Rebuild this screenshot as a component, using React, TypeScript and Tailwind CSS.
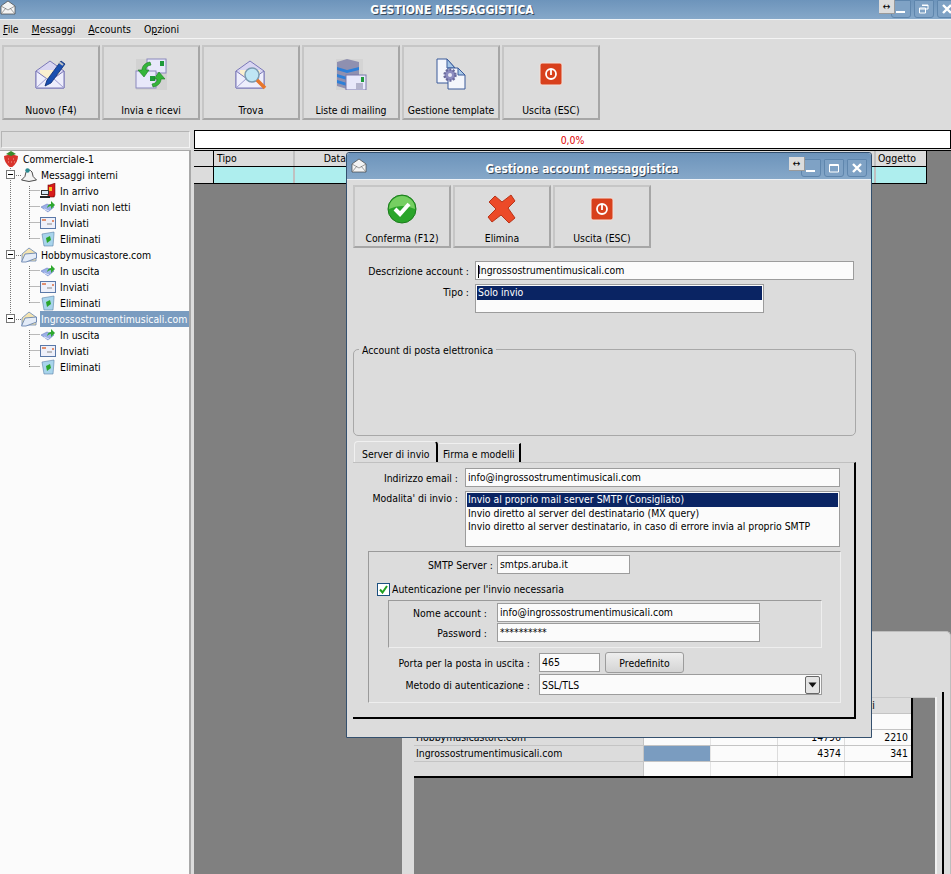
import React from "react";

const FONT = "font-['DejaVu_Sans_Condensed','DejaVu_Sans',sans-serif] text-[10.4px] leading-[14px] text-black";

const Env = ({ x = 0 }: { x?: number }) => (
  <g transform={`translate(${x} 0)`}>
    <path d="M1 13 L15 3 L29 13 V30 H1 Z" fill="#d9d6f2" stroke="#7a78b8" />
    <path d="M5 12 H25 V21 H5 Z" fill="#fbf0d0" />
    <path d="M1 13 L15 23 L29 13 V30 H1 Z" fill="#eeeefc" stroke="#7a78b8" />
    <path d="M1 30 L12 20 M29 30 L18 20" stroke="#9c9ad0" fill="none" />
  </g>
);

const IconNuovo = () => (
  <svg width="32" height="32" viewBox="0 0 32 32">
    <Env />
    <path d="M10 28 L12 22 L26 3 L30 6 L16 25 Z" fill="#1a4fb0" stroke="#0c2c70" strokeWidth="0.8" />
    <path d="M24 4 L28 7" stroke="#c0c0c0" strokeWidth="2" />
  </svg>
);
const IconInvia = () => (
  <svg width="32" height="32" viewBox="0 0 32 32">
    <rect x="1" y="1" width="31" height="31" fill="#d2d2d2" />
    <rect x="12" y="1" width="19" height="14" fill="#e8e8fa" stroke="#8a88bc" />
    <rect x="1" y="13" width="20" height="17" fill="#e8e8fa" stroke="#8a88bc" />
    <rect x="25" y="3" width="4" height="5" fill="#1f9a3a" />
    <rect x="15" y="18" width="5" height="5" fill="#1f9a3a" />
    <path d="M15 4 C9 5 7 9 7 12 H3 L9 19 L14 12 H11 C11 9 12 8 16 7 Z" fill="#35b53a" stroke="#1a7a20" strokeWidth="0.6" />
    <path d="M18 29 C24 28 26 24 26 21 H30 L24 14 L19 21 H22 C22 24 21 25 17 26 Z" fill="#35b53a" stroke="#1a7a20" strokeWidth="0.6" />
  </svg>
);
const IconTrova = () => (
  <svg width="32" height="32" viewBox="0 0 32 32">
    <Env />
    <circle cx="17" cy="17" r="7" fill="#bfe6f4" stroke="#7a9ab0" strokeWidth="1.5" />
    <path d="M22 22 L30 30" stroke="#e8762a" strokeWidth="3.5" />
  </svg>
);
const IconListe = () => (
  <svg width="32" height="32" viewBox="0 0 32 32">
    <rect x="1" y="1" width="27" height="31" fill="#d4d4d4" />
    <path d="M2 4 L12 1 L24 4 V28 L12 31 L2 28 Z" fill="#8f90b0" />
    <path d="M2 9 L12 12 L24 9 V12 L12 15 L2 12 Z" fill="#2d7fd8" />
    <path d="M2 16 L12 19 V22 L2 19 Z" fill="#2d7fd8" />
    <path d="M2 22 L12 25 V28 L2 25 Z" fill="#2d7fd8" />
    <rect x="11" y="17" width="20" height="15" fill="#e8e8fa" stroke="#7a78a8" />
    <rect x="26" y="19" width="3" height="5" fill="#1f9a3a" />
    <path d="M21 26 H28 M21 28 H28 M21 30 H28" stroke="#666688" strokeWidth="0.8" />
  </svg>
);
const IconTemplate = () => (
  <svg width="30" height="32" viewBox="0 0 30 32">
    <path d="M1 1 H11 L19 10 V25 H1 Z" fill="#f4f6fc" stroke="#3a5a9a" />
    <path d="M11 1 V10 H19 Z" fill="#a8c8e8" stroke="#3a5a9a" />
    <path d="M12 10 H22 L29 17 V31 H12 Z" fill="#f4f6fc" stroke="#3a5a9a" />
    <path d="M22 10 V17 H29 Z" fill="#a8c8e8" stroke="#3a5a9a" />
    <circle cx="14" cy="17" r="5.5" fill="#8c8cc0" stroke="#6a6a9c" strokeWidth="2.4" strokeDasharray="2 1.5" />
    <circle cx="14" cy="17" r="2" fill="#e8e8f4" />
  </svg>
);
const IconExit = () => (
  <svg width="24" height="24" viewBox="0 0 24 24">
    <rect x="1" y="1" width="22" height="22" rx="2" fill="#d8401c" stroke="#f4e0d8" />
    <circle cx="12" cy="12" r="5" fill="none" stroke="#fff" strokeWidth="1.8" />
    <path d="M12 8 V13" stroke="#fff" strokeWidth="1.8" />
  </svg>
);
const IconCheck = () => (
  <svg width="30" height="30" viewBox="0 0 30 30">
    <circle cx="15" cy="15" r="14" fill="#2aa52a" stroke="#1c7c1c" />
    <path d="M2 15 A13 13 0 0 1 28 15 Q15 9 2 15" fill="#76cf62" />
    <path d="M8 15 L13 20 L22 10" fill="none" stroke="#fff" strokeWidth="4" />
  </svg>
);
const IconX = () => (
  <svg width="30" height="30" viewBox="0 0 30 30">
    <path d="M2 8 L8 2 L15 8 L24 1 L28 7 L21 14 L28 24 L22 29 L14 21 L5 28 L1 23 L9 15 Z" fill="#ec4a28" stroke="#b83418" />
  </svg>
);
const TitleEnv = () => (
  <svg width="16" height="16" viewBox="0 0 16 16">
    <path d="M1 6 L8 1 L15 6 V14 H1 Z" fill="#f4f4f4" stroke="#444" strokeWidth="0.7" />
    <path d="M1 6 L8 10 L15 6 M1 14 L6 8 M15 14 L10 8" fill="none" stroke="#777" strokeWidth="0.7" />
  </svg>
);

const Strawberry = () => (
  <svg width="16" height="16" viewBox="0 0 16 16">
    <path d="M1 5 Q8 2 15 5 Q15 12 8 17 Q1 12 1 5" fill="#d8342c" />
    <path d="M3 3 L8 0 L13 3 L8 5 Z" fill="#3a8a2a" />
    <path d="M5 8 h1 M10 8 h1 M8 11 h1 M5 11 h1 M11 11 h1" stroke="#f4a090" />
  </svg>
);
const Bell = () => (
  <svg width="16" height="16" viewBox="0 0 16 16">
    <path d="M0.5 13 Q5 10 5 5 Q8 1 11 5 Q11 10 15.5 13 Q8 16 0.5 13" fill="#f4f4f4" stroke="#222" strokeWidth="0.8" />
    <circle cx="6.5" cy="3.5" r="2.2" fill="#2a8a90" />
  </svg>
);
const Inbox = () => (
  <svg width="16" height="16" viewBox="0 0 16 16">
    <rect x="8" y="2" width="6" height="12" fill="#d81c1c" stroke="#600" strokeWidth="0.6" />
    <path d="M10 2 L15 0 V12 L14 14" fill="#d81c1c" stroke="#600" strokeWidth="0.5" />
    <rect x="9" y="4" width="3" height="4" fill="#f4c020" />
    <rect x="1" y="7" width="8" height="5" fill="#333" />
    <rect x="2" y="8" width="6" height="3" fill="#d8e8f4" />
    <rect x="0" y="13" width="10" height="2" fill="#222" />
  </svg>
);
const Outbox = () => (
  <svg width="16" height="16" viewBox="0 0 16 16">
    <path d="M1 8 L7 5 L14 8 L8 13 Z" fill="#9cb0e8" stroke="#6a80c0" strokeWidth="0.6" />
    <path d="M4 10 L9 12" stroke="#dfe6fa" />
    <path d="M7 9 Q8 5 11 5 V2 L15 6 L11 10 V7 Q9 7 7 9" fill="#2ea82e" />
  </svg>
);
const Sent = () => (
  <svg width="16" height="16" viewBox="0 0 16 16">
    <rect x="0.5" y="2.5" width="15" height="11" fill="#eef0fa" stroke="#5a78a8" />
    <rect x="2" y="4" width="4" height="2" fill="#e09070" />
    <path d="M7 9 H12" stroke="#888" />
    <rect x="12" y="5" width="2" height="2" fill="#e09070" />
  </svg>
);
const Trash = () => (
  <svg width="16" height="16" viewBox="0 0 16 16">
    <path d="M2 3 L14 1 V3 L13 15 H4 Z" fill="#a8d4ec" stroke="#5a80a8" strokeWidth="0.6" />
    <path d="M6 7 L10 5 L11 9 L7 12 Z" fill="#2aa52a" />
  </svg>
);
const FolderEnv = () => (
  <svg width="16" height="16" viewBox="0 0 16 16">
    <path d="M1 7 L8 1 L15 6 V14 H1 Z" fill="#f4e4b0" stroke="#6a88b8" strokeWidth="0.8" />
    <path d="M0.5 15 L4 7 L15.5 6 V11 L5 15 Z" fill="#e4ecf8" stroke="#5a78a8" strokeWidth="0.8" />
  </svg>
);

const tb = "flex flex-col items-center bg-[#dcdcdc] border-2 border-t-[#c6c6c6] border-l-[#c6c6c6] border-r-[#a6a6a6] border-b-[#a6a6a6]";

const ToolBtn = ({ icon, label }: { icon: React.ReactNode; label: string }) => (
  <div className={`${tb} w-[98px] h-[75px]`}>
    <div className="h-[56px] flex items-center justify-center pb-[2px]">{icon}</div>
    <div className="whitespace-nowrap">{label}</div>
  </div>
);
const DlgBtn = ({ icon, label }: { icon: React.ReactNode; label: string }) => (
  <div className={`${tb} w-[98px] h-[63px]`}>
    <div className="h-[44px] flex items-center justify-center pb-[1px]">{icon}</div>
    <div className="whitespace-nowrap">{label}</div>
  </div>
);

const WinBtn = ({ kind }: { kind: "min" | "max" | "rest" | "x" }) => (
  <div className="w-[20px] h-[18px] rounded-b-[3px] rounded-t-[1px] border border-[#5f86ad] bg-[#7fa2c5] flex items-center justify-center">
    <svg width="12" height="12" viewBox="0 0 12 12">
      {kind === "min" && <rect x="1" y="8" width="9" height="2" fill="#fff" />}
      {kind === "max" && <path d="M1.5 2.5 H10.5 V10 H1.5 Z M1.5 3.5 H10.5" fill="none" stroke="#fff" strokeWidth="1" />}
      {kind === "rest" && <path d="M4 2 H10 V6 H8 M1.5 5 H7.5 V10 H1.5 Z M1.5 6 H7.5 M4 2.5 H10" fill="none" stroke="#fff" />}
      {kind === "x" && <path d="M2 2 L10 10 M10 2 L2 10" stroke="#fff" strokeWidth="2.4" />}
    </svg>
  </div>
);
const Resize = () => (
  <div className="absolute top-0 w-[16px] h-[14px] bg-[#dcdcdc] border-r border-b border-[#9a9a9a] flex items-center justify-center text-[10px] leading-none">↔</div>
);

const TreeRow = ({ icon, label, level, sel }: { icon: React.ReactNode; label: string; level: 0 | 1 | 2; sel?: boolean }) => (
  <div className="flex h-4 items-center">
    <div className={level === 0 ? "w-[3px]" : level === 1 ? "w-[21px]" : "w-[40px]"} />
    <div className="w-4 h-4 shrink-0">{icon}</div>
    <div className="w-[4px]" />
    <div className={sel ? "bg-[#7a9cc0] text-white h-4 w-[149px] -ml-[1px] pl-[1px] whitespace-nowrap leading-[16px]" : "whitespace-nowrap"}>{label}</div>
  </div>
);

const Exp = ({ top }: { top: number }) => (
  <div style={{ top }} className="absolute left-[6px] w-[9px] h-[9px] bg-white border border-[#777] flex items-center justify-center">
    <div className="w-[5px] h-px bg-black" />
  </div>
);

const Input = ({ value, cls }: { value: React.ReactNode; cls: string }) => (
  <div className={`${cls} h-[19px] bg-[#fbfbfb] border border-[#9c9c9c] px-[2px] leading-[17px] whitespace-nowrap`}>{value}</div>
);
const Lbl = ({ w, children }: { w: string; children: React.ReactNode }) => (
  <div className={`${w} shrink-0 text-right whitespace-nowrap`}>{children}</div>
);

const Dialog = () => (
  <div className="absolute left-[346px] top-[152px] w-[526px] h-[586px] bg-[#dcdcdc] border border-[#34506e] rounded-t-[3px]">
    <div className="relative h-[27px] rounded-t-[3px] bg-gradient-to-b from-[#6d94bb] to-[#86a8c9] flex items-center justify-center border-b border-[#eef2f6] pr-[54px]">
      <div className="absolute left-[4px] top-[5px]"><TitleEnv /></div>
      <div className="text-white font-bold text-[11.8px] [text-shadow:1px_1px_0_#3a4a5a] pt-[6px]">Gestione account messaggistica</div>
      <div className="absolute right-[4px] top-[6px] flex gap-[3px]"><WinBtn kind="min" /><WinBtn kind="max" /><WinBtn kind="x" /></div>
      <div className="absolute left-[442px] top-[4px]"><Resize /></div>
    </div>
    <div className="pl-[6px] pt-[5px]">
      <div className="flex gap-[2px]">
        <DlgBtn icon={<IconCheck />} label="Conferma (F12)" />
        <DlgBtn icon={<IconX />} label="Elimina" />
        <DlgBtn icon={<IconExit />} label="Uscita (ESC)" />
      </div>
      <div className="flex items-center gap-[6px] mt-[13px]">
        <Lbl w="w-[116px]">Descrizione account :</Lbl>
        <div className="w-[379px] h-[19px] bg-[#fbfbfb] border border-[#9c9c9c] px-[2px] leading-[17px]">
          <span className="inline-block align-middle w-px h-[13px] -mr-px bg-black" />Ingrossostrumentimusicali.com
        </div>
      </div>
      <div className="flex gap-[6px] mt-[4px]">
        <div className="w-[116px] shrink-0 text-right pt-px">Tipo :</div>
        <div className="w-[289px] h-[29px] bg-[#fbfbfb] border border-[#9c9c9c] p-px">
          <div className="bg-[#0a2463] text-white h-[14px] px-[1px] leading-[13px]">Solo invio</div>
        </div>
      </div>
      <div className="relative mt-[36px] w-[503px] h-[87px] border border-[#a8a8a8] rounded-[5px]">
        <div className="absolute left-[5px] -top-[7px] bg-[#dcdcdc] px-[3px]">Account di posta elettronica</div>
      </div>
      <div className="flex mt-[5px] h-[21px] items-end pl-px">
        <div className="w-[84px] h-[21px] rounded-t-[4px] border-t border-l border-[#f0f0f0] border-r-2 border-r-black pl-[7px] pt-[5px]">Server di invio</div>
        <div className="w-[82px] h-[19px] ml-[1px] border-r-2 border-black border-t border-t-[#f0f0f0] pl-[4px] pt-[3px]">Firma e modelli</div>
      </div>
      <div className="w-[503px] h-[257px] border-t border-t-[#c0c0c0] border-r-2 border-r-black border-b-2 border-b-black pt-[5px]">
        <div className="flex items-center gap-[7px]">
          <Lbl w="w-[105px]">Indirizzo email :</Lbl>
          <Input value="info@ingrossostrumentimusicali.com" cls="w-[375px]" />
        </div>
        <div className="flex gap-[7px] mt-[4px]">
          <Lbl w="w-[105px]">Modalita' di invio :</Lbl>
          <div className="w-[375px] h-[56px] bg-[#fbfbfb] border border-[#9c9c9c] p-px leading-[13px]">
            <div className="bg-[#0a2463] text-white h-[14px] px-[1px]">Invio al proprio mail server SMTP (Consigliato)</div>
            <div className="px-[1px]">Invio diretto al server del destinatario (MX query)</div>
            <div className="px-[1px]">Invio diretto al server destinatario, in caso di errore invia al proprio SMTP</div>
          </div>
        </div>
        <div className="ml-[15px] mt-[4px] w-[473px] h-[152px] border border-[#9a9a9a] border-r-[#eeeeee] border-b-[#eeeeee] pt-[3px]">
          <div className="flex items-center gap-[4px]">
            <Lbl w="w-[124px]">SMTP Server :</Lbl>
            <Input value="smtps.aruba.it" cls="w-[133px]" />
          </div>
          <div className="flex items-center ml-[8px] mt-[8px] h-[14px]">
            <div className="w-[13px] h-[13px] bg-white border border-[#1c5180] flex items-center justify-center">
              <svg width="9" height="9" viewBox="0 0 9 9"><path d="M1 4.5 L3.5 7.5 L8 1" fill="none" stroke="#21a121" strokeWidth="2" /></svg>
            </div>
            <div className="ml-[2px]">Autenticazione per l'invio necessaria</div>
          </div>
          <div className="ml-[19px] mt-[4px] w-[434px] h-[48px] border border-[#9a9a9a] border-r-[#eeeeee] border-b-[#eeeeee] pt-[2px]">
            <div className="flex items-center">
              <Lbl w="w-[98px]">Nome account :</Lbl>
              <Input value="info@ingrossostrumentimusicali.com" cls="ml-[10px] w-[263px]" />
            </div>
            <div className="flex items-center mt-px">
              <Lbl w="w-[98px]">Password :</Lbl>
              <Input value="**********" cls="ml-[10px] w-[263px]" />
            </div>
          </div>
          <div className="flex items-center mt-[4px] h-[21px]">
            <Lbl w="w-[161px]">Porta per la posta in uscita :</Lbl>
            <Input value="465" cls="ml-[9px] w-[61px]" />
            <div className="ml-[5px] w-[79px] h-[21px] rounded-[3px] border border-[#9c9c9c] bg-gradient-to-b from-[#eeeeee] to-[#d4d4d4] flex items-center justify-center">Predefinito</div>
          </div>
          <div className="flex items-center mt-px">
            <Lbl w="w-[161px]">Metodo di autenticazione :</Lbl>
            <div className="ml-[9px] w-[283px] h-[21px] bg-[#fbfbfb] border border-[#9c9c9c] pl-[2px] flex items-center justify-between pr-px">
              <span>SSL/TLS</span>
              <div className="w-[15px] h-[18px] rounded-[2px] border border-[#666] bg-[#e4e4e4] flex items-center justify-center">
                <svg width="9" height="6" viewBox="0 0 9 6"><path d="M0.5 0.5 H8.5 L4.5 5.5 Z" fill="#111" /></svg>
              </div>
            </div>
          </div>
        </div>
      </div>
    </div>
  </div>
);

const GridRow = ({ name, a, b, fill, head }: { name: string; a: string; b: string; fill?: boolean; head?: boolean }) => (
  <div className="flex h-4 border-b border-[#c4c4c4] overflow-hidden leading-[15px]">
    <div className="w-[230px] bg-[#dcdcdc] border-r border-[#c4c4c4] pl-[2px] whitespace-nowrap">{name}</div>
    <div className={`${fill ? "bg-[#7a9cc0]" : head ? "bg-[#dcdcdc]" : "bg-[#fbfbfb]"} w-[67px] border-r border-[#e4e4e4]`} />
    <div className={`${head ? "bg-[#dcdcdc]" : "bg-[#fbfbfb]"} w-[67px] border-r border-[#dcdcdc]`} />
    <div className={`${head ? "bg-[#dcdcdc]" : "bg-[#fbfbfb]"} w-[67px] border-r border-[#dcdcdc] text-right pr-[3px]`}>{a}</div>
    <div className={head ? "flex-1 bg-[#dcdcdc] pl-px" : "flex-1 bg-[#fbfbfb] text-right pr-[3px]"}>{b}</div>
  </div>
);

const SubWindow = () => (
  <div className="absolute left-[402px] top-[631px] w-[549px] h-[243px] bg-[#dcdcdc] border-t border-r border-[#bdbdbd] rounded-tr-[5px]">
    <div className="absolute left-[12px] top-[65px] w-[521px] h-[178px] bg-[#808080] border-t border-[#c8c8c8]">
      <div className="w-[499px] h-[80px] overflow-hidden border-b-2 border-r-2 border-black">
        <GridRow head name="" a="" b="Inviati" />
        <GridRow name="" a="" b="" />
        <GridRow name="Hobbymusicastore.com" a="14796" b="2210" />
        <GridRow fill name="Ingrossostrumentimusicali.com" a="4374" b="341" />
        <GridRow name="" a="" b="" />
      </div>
    </div>
    <div className="absolute left-[533px] top-[65px] w-[2px] h-[178px] bg-[#f0f0f0]" />
    <div className="absolute left-[540px] top-[60px] w-[2px] h-[183px] bg-black" />
  </div>
);

export default function App() {
  return (
    <div className={`${FONT} relative w-[951px] h-[874px] overflow-hidden bg-[#dcdcdc] flex flex-col`}>
      <div className="relative h-[20px] shrink-0 bg-gradient-to-b from-[#6d94bb] to-[#86a8c9] border-b border-[#eef2f6] flex items-center justify-center pr-[47px]">
        <div className="absolute left-0 top-0"><TitleEnv /></div>
        <div className="text-white font-bold text-[12px] [text-shadow:1px_1px_0_#3a4a5a]">GESTIONE MESSAGGISTICA</div>
        <div className="absolute left-[891px] top-0 flex gap-[3px]"><WinBtn kind="min" /><WinBtn kind="rest" /><WinBtn kind="x" /></div>
        <div className="absolute left-[879px] top-0"><Resize /></div>
      </div>
      <div className="h-[19px] shrink-0 border-b border-[#f4f4f4] flex items-center pl-[3px] gap-[13px]">
        <span><u>F</u>ile</span>
        <span><u>M</u>essaggi</span>
        <span><u>A</u>ccounts</span>
        <span>O<u>p</u>zioni</span>
      </div>
      <div className="h-[90px] shrink-0 flex gap-[2px] pl-[2px] pt-[6px]">
        <ToolBtn icon={<IconNuovo />} label="Nuovo (F4)" />
        <ToolBtn icon={<IconInvia />} label="Invia e ricevi" />
        <ToolBtn icon={<IconTrova />} label="Trova" />
        <ToolBtn icon={<IconListe />} label="Liste di mailing" />
        <ToolBtn icon={<IconTemplate />} label="Gestione template" />
        <ToolBtn icon={<IconExit />} label="Uscita (ESC)" />
      </div>
      <div className="h-[20px] shrink-0 flex items-center pl-[1px]">
        <div className="w-[189px] h-[17px] border border-[#b4b4b4] border-r-[#f4f4f4] border-b-[#f4f4f4]" />
        <div className="ml-[4px] w-[757px] h-[19px] bg-white border border-black text-[#e00000] text-center leading-[18px]">0,0%</div>
      </div>
      <div className="flex-1 flex mt-[1px] min-h-0">
        <div className="relative w-[191px] shrink-0 bg-[#fbfbfb] border-t border-r-2 border-[#a8a8a8]">
          <svg className="absolute left-0 -top-px" width="60" height="240" stroke="#777" strokeDasharray="1 1" fill="none">
            <path d="M10.5 12 V169 M16 25.5 H21 M16 105.5 H21 M16 169.5 H21" />
            <path d="M29.5 36 V89 M29.5 40.5 H40 M29.5 56.5 H40 M29.5 72.5 H40 M29.5 88.5 H40" />
            <path d="M29.5 116 V153 M29.5 120.5 H40 M29.5 136.5 H40 M29.5 152.5 H40" />
            <path d="M29.5 180 V217 M29.5 184.5 H40 M29.5 200.5 H40 M29.5 216.5 H40" />
          </svg>
          <Exp top={19} /><Exp top={99} /><Exp top={163} />
          <div className="relative">
            <TreeRow level={0} icon={<Strawberry />} label="Commerciale-1" />
            <TreeRow level={1} icon={<Bell />} label="Messaggi interni" />
            <TreeRow level={2} icon={<Inbox />} label="In arrivo" />
            <TreeRow level={2} icon={<Outbox />} label="Inviati non letti" />
            <TreeRow level={2} icon={<Sent />} label="Inviati" />
            <TreeRow level={2} icon={<Trash />} label="Eliminati" />
            <TreeRow level={1} icon={<FolderEnv />} label="Hobbymusicastore.com" />
            <TreeRow level={2} icon={<Outbox />} label="In uscita" />
            <TreeRow level={2} icon={<Sent />} label="Inviati" />
            <TreeRow level={2} icon={<Trash />} label="Eliminati" />
            <TreeRow level={1} sel icon={<FolderEnv />} label="Ingrossostrumentimusicali.com" />
            <TreeRow level={2} icon={<Outbox />} label="In uscita" />
            <TreeRow level={2} icon={<Sent />} label="Inviati" />
            <TreeRow level={2} icon={<Trash />} label="Eliminati" />
          </div>
        </div>
        <div className="flex-1 ml-[3px] bg-[#808080] border-t border-black">
          <div className="w-[733px] border-r border-b border-black">
            <div className="flex h-[16px] bg-[#dcdcdc] border-b border-black">
              <div className="w-[20px] border-r border-black" />
              <div className="w-[81px] border-r-2 border-[#c0c0c0] pl-[3px]">Tipo</div>
              <div className="w-[51px] text-right">Data</div>
              <div className="flex-1" />
              <div className="w-[52px] border-l-2 border-[#c0c0c0] pl-[2px]">Oggetto</div>
            </div>
            <div className="flex h-[16px] bg-[#aeeeee]">
              <div className="w-[20px] bg-[#dcdcdc] border-r border-black" />
              <div className="w-[81px] border-r-2 border-[#c0c0c0]" />
              <div className="flex-1" />
              <div className="w-[52px] border-l-2 border-[#c0c0c0]" />
            </div>
          </div>
        </div>
      </div>
      <SubWindow />
      <Dialog />
    </div>
  );
}
